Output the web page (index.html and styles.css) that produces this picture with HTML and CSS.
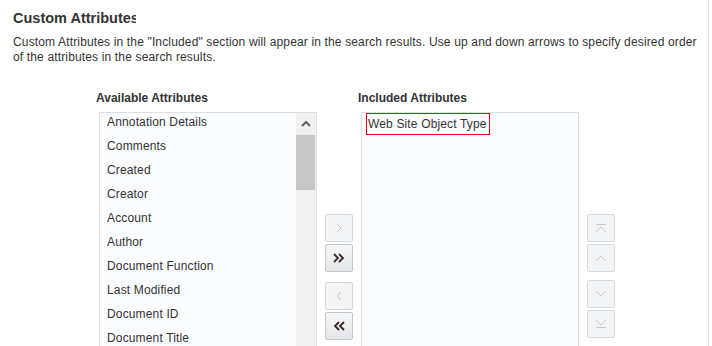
FILE: index.html
```html
<!DOCTYPE html>
<html>
<head>
<meta charset="utf-8">
<link rel="stylesheet" href="styles.css">
</head>
<body>
<div class="page">
  <h1 class="title">Custom Attributes</h1>
  <p class="desc">Custom Attributes in the "Included" section will appear in the search results. Use up and down arrows to specify desired order of the attributes in the search results.</p>
  <div class="shuttle">
    <div class="labels">
      <span class="lbl lbl-avail">Available Attributes</span>
      <span class="lbl">Included Attributes</span>
    </div>
    <div class="boxes">
      <div class="listbox avail">
        <ul class="items">
          <li>Annotation Details</li>
          <li>Comments</li>
          <li>Created</li>
          <li>Creator</li>
          <li>Account</li>
          <li>Author</li>
          <li>Document Function</li>
          <li>Last Modified</li>
          <li>Document ID</li>
          <li>Document Title</li>
        </ul>
        <div class="scrollbar">
          <div class="sb-up"><svg width="10" height="6" viewBox="0 0 10 6"><polyline points="1,5 5,1 9,5" fill="none" stroke="#5f5f5f" stroke-width="2"/></svg></div>
          <div class="sb-thumb"></div>
        </div>
      </div>
      <div class="movebtns">
        <div class="btn disabled"><svg width="6" height="10" viewBox="0 0 6 10"><polyline points="1,1 5,5 1,9" fill="none" stroke="#c9c9c9" stroke-width="1"/></svg></div>
        <div class="btn gap-s"><svg width="12" height="10" viewBox="0 0 12 10"><polyline points="1,1 5,5 1,9" fill="none" stroke="#3b2626" stroke-width="1.8"/><polyline points="6,1 10,5 6,9" fill="none" stroke="#3b2626" stroke-width="1.8"/></svg></div>
        <div class="btn disabled gap-l"><svg width="6" height="10" viewBox="0 0 6 10"><polyline points="5,1 1,5 5,9" fill="none" stroke="#c9c9c9" stroke-width="1"/></svg></div>
        <div class="btn gap-s"><svg width="12" height="10" viewBox="0 0 12 10"><polyline points="6,1 2,5 6,9" fill="none" stroke="#3b2626" stroke-width="1.8"/><polyline points="11,1 7,5 11,9" fill="none" stroke="#3b2626" stroke-width="1.8"/></svg></div>
      </div>
      <div class="listbox incl">
        <ul class="items">
          <li class="selected"><span class="sel-text">Web Site Object Type</span></li>
        </ul>
      </div>
      <div class="orderbtns">
        <div class="btn disabled"><svg width="12" height="10" viewBox="0 0 12 10"><line x1="1" y1="1.5" x2="11" y2="1.5" stroke="#c9c9c9" stroke-width="1"/><polyline points="1,9 6,4 11,9" fill="none" stroke="#c9c9c9" stroke-width="1"/></svg></div>
        <div class="btn disabled gap-s"><svg width="12" height="8" viewBox="0 0 12 8"><polyline points="1,7 6,2 11,7" fill="none" stroke="#c9c9c9" stroke-width="1"/></svg></div>
        <div class="btn disabled gap-m"><svg width="12" height="8" viewBox="0 0 12 8"><polyline points="1,1 6,6 11,1" fill="none" stroke="#c9c9c9" stroke-width="1"/></svg></div>
        <div class="btn disabled gap-s"><svg width="12" height="10" viewBox="0 0 12 10"><polyline points="1,1 6,6 11,1" fill="none" stroke="#c9c9c9" stroke-width="1"/><line x1="1" y1="8.5" x2="11" y2="8.5" stroke="#c9c9c9" stroke-width="1"/></svg></div>
      </div>
    </div>
  </div>
</div>
</body>
</html>
```
FILE: styles.css
```css
html, body {
  margin: 0;
  padding: 0;
  background: #ffffff;
  overflow: hidden;
}
body {
  font-family: "Liberation Sans", Arial, sans-serif;
  color: #333333;
}
.page {
  box-sizing: border-box;
  width: 709px;
  height: 346px;
  padding: 10px 8px 0 13px;
  border-right: 1px solid #dde1e5;
  overflow: hidden;
}
.title {
  margin: 0;
  font-size: 14.5px;
  font-weight: bold;
  line-height: 17px;
  width: 123px;
  overflow: hidden;
  white-space: nowrap;
  color: #333333;
}
.desc {
  margin: 8px 0 0 0;
  font-size: 12px;
  line-height: 15px;
  letter-spacing: 0.15px;
  width: 690px;
}
.shuttle {
  margin: 26px 0 0 83px;
}
.labels {
  display: flex;
  font-size: 12px;
  font-weight: bold;
  line-height: 15px;
}
.lbl-avail {
  width: 262px;
}
.boxes {
  display: flex;
  margin: 6px 0 0 3px;
}
.listbox {
  box-sizing: border-box;
  width: 218px;
  height: 240px;
  border: 1px solid #dce0e4;
  background: #fbfcfe;
  overflow: hidden;
  display: flex;
}
.items {
  list-style: none;
  margin: -3px 0 0 0;
  padding: 0;
  flex: 1;
  font-size: 12px;
  letter-spacing: 0.15px;
}
.avail .items li {
  line-height: 24px;
  padding-left: 7px;
  white-space: nowrap;
}
.scrollbar {
  width: 20px;
  background: #f0f0f0;
  flex: none;
  display: flex;
  flex-direction: column;
}
.sb-up {
  height: 22px;
  display: flex;
  align-items: center;
  justify-content: center;
}
.sb-thumb {
  height: 55px;
  background: #c7c7c7;
  margin-right: 1px;
}
.incl .items {
  margin-top: 0;
  padding: 0 0 0 4px;
}
.incl .selected {
  display: flex;
  align-items: flex-start;
}
.sel-text {
  display: block;
  box-sizing: border-box;
  height: 22px;
  border: 1px solid #e3000f;
  padding: 0 2px 0 1px;
  line-height: 20px;
  white-space: nowrap;
}
.movebtns {
  width: 44px;
  padding-top: 102px;
  display: flex;
  flex-direction: column;
  align-items: center;
}
.orderbtns {
  padding: 102px 0 0 8px;
  display: flex;
  flex-direction: column;
}
.btn {
  box-sizing: border-box;
  width: 28px;
  height: 28px;
  border: 1px solid #c3c8cd;
  border-radius: 2px;
  background: linear-gradient(#f5f6f7, #e4e7ea);
  display: flex;
  align-items: center;
  justify-content: center;
}
.btn.disabled {
  border-color: #d7dadd;
  background: #f3f4f5;
}
.gap-s { margin-top: 2px; }
.gap-m { margin-top: 8px; }
.gap-l { margin-top: 10px; }
```
